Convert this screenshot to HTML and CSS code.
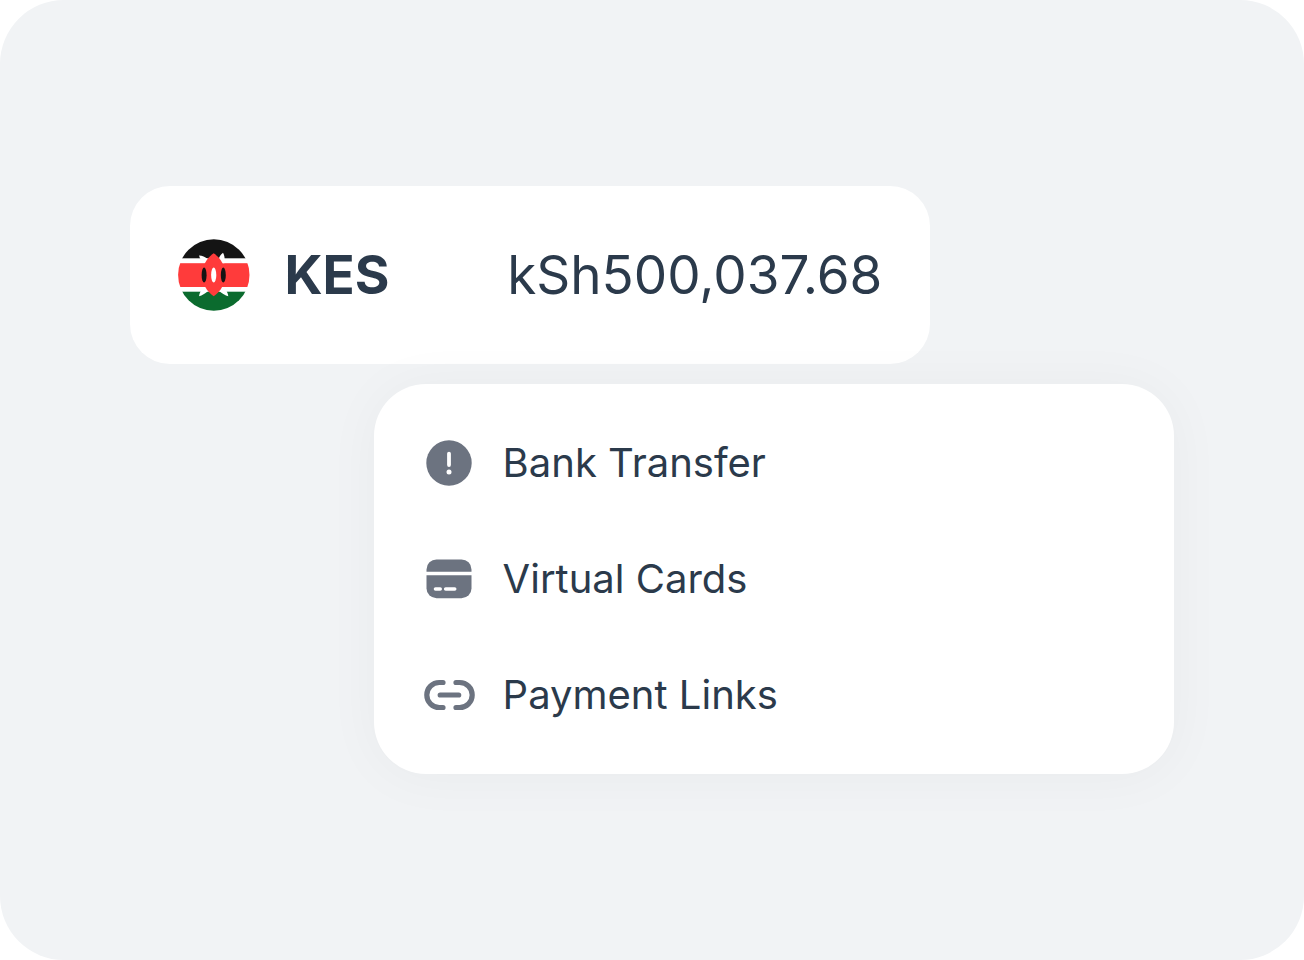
FILE: index.html
```html
<!DOCTYPE html>
<html lang="en">
  <head>
    <meta charset="utf-8">
    <meta name="viewport" content="width=device-width, initial-scale=1">
    <title>KES account</title>
    <link rel="stylesheet" href="styles.css">
  </head>
  <body>
    <main class="stage">
      <section class="balance">
        <svg class="flag" viewBox="0 0 72 72" aria-hidden="true">
          <defs>
            <clipPath id="flagClip"><circle cx="35.8" cy="36" r="35.7" /></clipPath>
          </defs>
          <g clip-path="url(#flagClip)">
            <rect width="72" height="72" fill="#fff" />
            <rect width="72" height="19.3" fill="#141414" />
            <rect y="24.2" width="72" height="23.8" fill="#ff3b3b" />
            <rect y="52.7" width="72" height="20" fill="#0b6b2e" />
            <!-- spears -->
            <g fill="#fff">
              <path d="M21 16.5c3.5.2 6 1.5 8.3 3.3L31 24h-5c-2.3-2-4.2-4.3-5-7.5z" />
              <path d="M45 13.7c1.5 3 2.200 6 1.300 10.500H42l-1.500-3.700c.8-2.800 2.200-5 4.500-6.800z" />
              <path d="M21 57.300c.5-3.500 2-6.500 4.500-9.300h6l-2 4.500c-2.500 2-5.200 4-8.500 4.800z" />
              <path d="M50.300 57.300c-.5-3.500-2-6.500-4.500-9.300h-6l2 4.500c2.500 2 5.200 4 8.500 4.800z" />
            </g>
            <!-- shield -->
            <path d="M35.700 14.300C43 19 47 27 47 35.800S43 52.500 35.700 57.300C28.400 52.500 24.400 44.600 24.400 35.800S28.400 19 35.700 14.300z" fill="#ff3b3b" />
            <g fill="#141414">
              <ellipse cx="26.100" cy="36" rx="2.500" ry="7.400" />
              <ellipse cx="45.300" cy="36" rx="2.500" ry="7.400" />
            </g>
            <ellipse cx="35.700" cy="36" rx="2.600" ry="7.600" fill="#fff" />
          </g>
        </svg>
        <h1 class="currency">KES</h1>
        <p class="amount">kSh500,037.68</p>
      </section>

      <ul class="menu">
        <li>
          <button type="button" class="menu-item">
            <svg class="icon" viewBox="0 0 52 52" aria-hidden="true">
              <circle cx="26" cy="26" r="22.7" fill="currentColor" />
              <path d="M26 16.700v11.300" fill="none" stroke="#fff" stroke-width="3.800" stroke-linecap="round" />
              <circle cx="26" cy="34.900" r="2.500" fill="#fff" />
            </svg>
            Bank Transfer
          </button>
        </li>
        <li>
          <button type="button" class="menu-item">
            <svg class="icon" viewBox="0 0 52 52" aria-hidden="true">
              <path d="M3.500 18.700v-2.300a10 10 0 0 1 10-10h25a10 10 0 0 1 10 10v2.300z" fill="currentColor" />
              <path d="M3.500 22.200h45v13.100a10 10 0 0 1-10 10h-25a10 10 0 0 1-10-10z" fill="currentColor" />
              <path d="M12.500 36h4.700M22.700 36h9" fill="none" stroke="#fff" stroke-width="3.600" stroke-linecap="round" />
            </svg>
            Virtual Cards
          </button>
        </li>
        <li>
          <button type="button" class="menu-item">
            <svg class="icon" viewBox="0 0 52 52" aria-hidden="true">
              <path d="M20 13.500h-3.700a12.500 12.500 0 0 0 0 25H20M33 13.500h3.700a12.500 12.500 0 0 1 0 25H33M17.200 26h18.500" fill="none" stroke="currentColor" stroke-width="5.200" stroke-linecap="round" />
            </svg>
            Payment Links
          </button>
        </li>
      </ul>
    </main>
  </body>
</html>
```

FILE: styles.css
```css
* {
  box-sizing: border-box;
}

body {
  margin: 0;
  background-color: #fff;
  color: #2b3a4b;
  font-family: Inter, "Liberation Sans", sans-serif;
}

.stage {
  display: flex;
  flex-direction: column;
  justify-content: center;
  gap: 20px;
  min-height: 100vh;
  padding: 40px 10%;
  border-radius: 64px;
  background-color: #f1f3f5;
}

.balance,
.menu {
  width: 100%;
  max-width: 800px;
  background-color: #fff;
}

.balance {
  display: flex;
  align-items: center;
  gap: 34px;
  padding: 53px 48px;
  border-radius: 40px;
}

.flag {
  flex: none;
  width: 72px;
  height: 72px;
}

.currency,
.amount {
  margin: 0;
  font-size: 53px;
  line-height: 72px;
}

.currency {
  font-weight: 700;
}

.amount {
  margin-left: auto;
}

.menu {
  align-self: flex-end;
  display: flex;
  flex-direction: column;
  gap: 64px;
  margin: 0;
  padding: 53px 49px;
  border-radius: 52px;
  box-shadow: 0 2px 56px rgba(0, 0, 0, 0.04);
  list-style: none;
}

.menu-item {
  display: flex;
  align-items: center;
  gap: 28px;
  width: 100%;
  padding: 0;
  border: none;
  background: none;
  color: inherit;
  font-family: inherit;
  font-size: 40px;
  line-height: 52px;
  text-align: left;
  cursor: pointer;
}

.icon {
  flex: none;
  width: 52px;
  height: 52px;
  color: #6c7380;
}
```
